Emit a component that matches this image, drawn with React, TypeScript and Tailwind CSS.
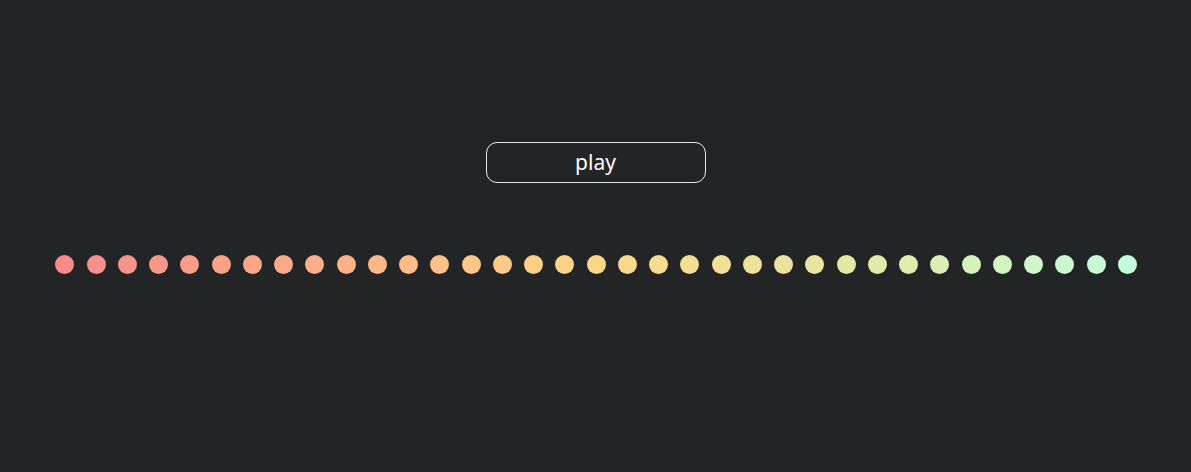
import React from "react";

const stops: [number, [number, number, number]][] = [
  [0, [0xf8, 0x8a, 0x8a]],
  [0.5, [0xfc, 0xd8, 0x86]],
  [0.75, [0xe4, 0xe8, 0xa6]],
  [1, [0xc4, 0xfd, 0xdb]],
];

function colorAt(t: number): string {
  for (let i = 0; i < stops.length - 1; i++) {
    const [t0, c0] = stops[i];
    const [t1, c1] = stops[i + 1];
    if (t >= t0 && t <= t1) {
      const f = (t - t0) / (t1 - t0);
      const c = c0.map((v, k) => Math.round(v + (c1[k] - v) * f));
      return `rgb(${c[0]},${c[1]},${c[2]})`;
    }
  }
  return "#fff";
}

const N = 35;
const colors = Array.from({ length: N }, (_, i) => colorAt(i / (N - 1)));

export default function App() {
  return (
    <div
      className="w-[1191px] h-[472px] bg-[#232425] flex flex-col items-center pt-[142px]"
      style={{ fontFamily: '"Noto Sans", "Open Sans", sans-serif' }}
    >
      <button className="w-[220px] h-[41px] rounded-[11px] border border-white/90 text-white text-[21px] leading-none flex items-center justify-center bg-transparent pb-[1px]">
        play
      </button>
      <div className="mt-[72px] flex gap-[12.26px] pl-[1px]">
        {colors.map((c, i) => (
          <div
            key={i}
            className="w-[19px] h-[19px] rounded-full"
            style={{ backgroundColor: c }}
          />
        ))}
      </div>
    </div>
  );
}
